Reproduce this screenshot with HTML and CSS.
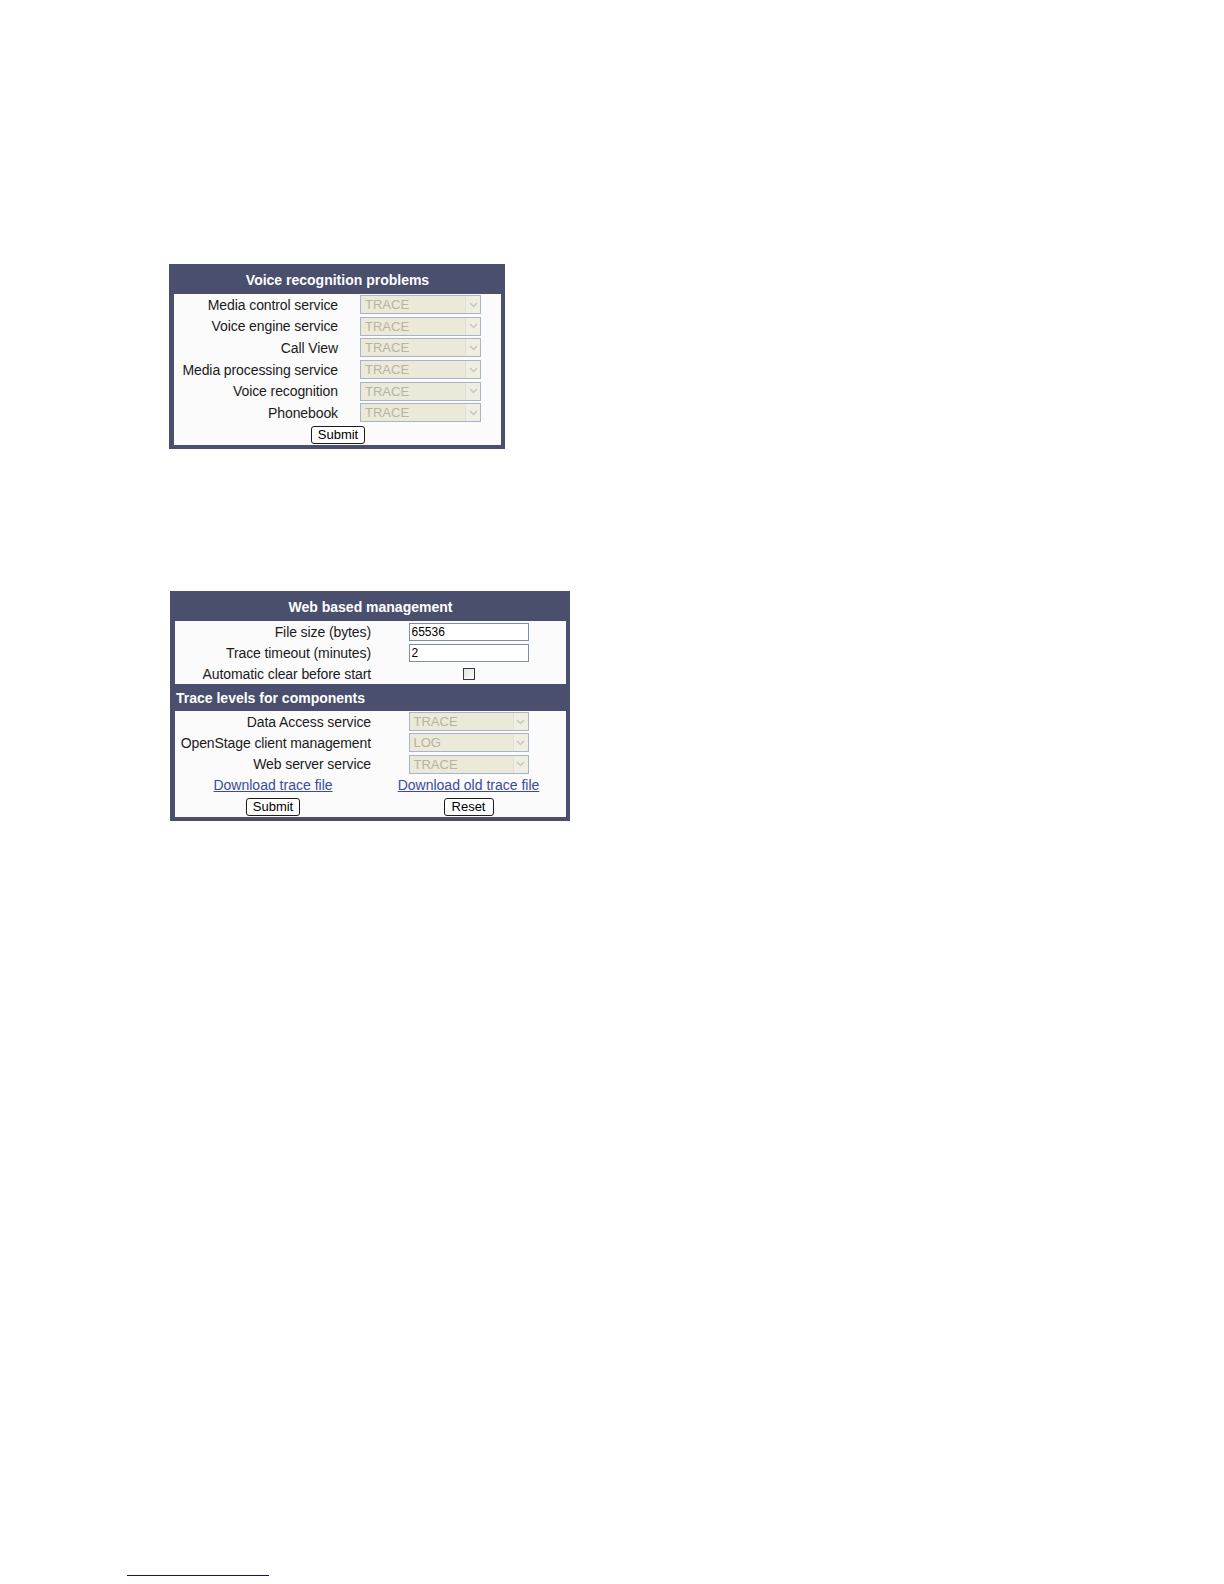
FILE: index.html
```html
<!DOCTYPE html>
<html>
<head>
<meta charset="utf-8">
<link rel="stylesheet" href="styles.css">
</head>
<body>
<div class="page">
  <div class="panel panel-voice">
    <div class="hdr">Voice recognition problems</div>
    <div class="body grid-voice">
      <div class="lbl">Media control service</div><div class="val"><div class="sel"><span>TRACE</span><i class="arr"><svg width="9" height="6" viewBox="0 0 9 6"><path d="M1 1 L4.5 4.5 L8 1" fill="none" stroke="#c9c7bd" stroke-width="1.5"/></svg></i></div></div>
      <div class="lbl">Voice engine service</div><div class="val"><div class="sel"><span>TRACE</span><i class="arr"><svg width="9" height="6" viewBox="0 0 9 6"><path d="M1 1 L4.5 4.5 L8 1" fill="none" stroke="#c9c7bd" stroke-width="1.5"/></svg></i></div></div>
      <div class="lbl">Call View</div><div class="val"><div class="sel"><span>TRACE</span><i class="arr"><svg width="9" height="6" viewBox="0 0 9 6"><path d="M1 1 L4.5 4.5 L8 1" fill="none" stroke="#c9c7bd" stroke-width="1.5"/></svg></i></div></div>
      <div class="lbl">Media processing service</div><div class="val"><div class="sel"><span>TRACE</span><i class="arr"><svg width="9" height="6" viewBox="0 0 9 6"><path d="M1 1 L4.5 4.5 L8 1" fill="none" stroke="#c9c7bd" stroke-width="1.5"/></svg></i></div></div>
      <div class="lbl">Voice recognition</div><div class="val"><div class="sel"><span>TRACE</span><i class="arr"><svg width="9" height="6" viewBox="0 0 9 6"><path d="M1 1 L4.5 4.5 L8 1" fill="none" stroke="#c9c7bd" stroke-width="1.5"/></svg></i></div></div>
      <div class="lbl">Phonebook</div><div class="val"><div class="sel"><span>TRACE</span><i class="arr"><svg width="9" height="6" viewBox="0 0 9 6"><path d="M1 1 L4.5 4.5 L8 1" fill="none" stroke="#c9c7bd" stroke-width="1.5"/></svg></i></div></div>
      <div class="full"><span class="btn btn-submit1">Submit</span></div>
    </div>
  </div>

  <div class="panel panel-web">
    <div class="hdr">Web based management</div>
    <div class="body grid-web">
      <div class="lbl">File size (bytes)</div><div class="val"><div class="inp">65536</div></div>
      <div class="lbl">Trace timeout (minutes)</div><div class="val"><div class="inp">2</div></div>
      <div class="lbl">Automatic clear before start</div><div class="val"><div class="chk"></div></div>
    </div>
    <div class="subhdr">Trace levels for components</div>
    <div class="body grid-web">
      <div class="lbl">Data Access service</div><div class="val"><div class="sel"><span>TRACE</span><i class="arr"><svg width="9" height="6" viewBox="0 0 9 6"><path d="M1 1 L4.5 4.5 L8 1" fill="none" stroke="#c9c7bd" stroke-width="1.5"/></svg></i></div></div>
      <div class="lbl">OpenStage client management</div><div class="val"><div class="sel"><span>LOG</span><i class="arr"><svg width="9" height="6" viewBox="0 0 9 6"><path d="M1 1 L4.5 4.5 L8 1" fill="none" stroke="#c9c7bd" stroke-width="1.5"/></svg></i></div></div>
      <div class="lbl">Web server service</div><div class="val"><div class="sel"><span>TRACE</span><i class="arr"><svg width="9" height="6" viewBox="0 0 9 6"><path d="M1 1 L4.5 4.5 L8 1" fill="none" stroke="#c9c7bd" stroke-width="1.5"/></svg></i></div></div>
      <div class="cell"><a class="lnk" href="#">Download trace file</a></div><div class="cell"><a class="lnk" href="#">Download old trace file</a></div>
      <div class="cell"><span class="btn btn-submit2">Submit</span></div><div class="cell"><span class="btn btn-reset">Reset</span></div>
    </div>
  </div>

  <div class="footline"></div>
</div>
</body>
</html>
```

FILE: styles.css
```css
* { box-sizing: border-box; }
html, body { margin: 0; padding: 0; background: #ffffff; }
body {
  font-family: "Liberation Sans", Arial, sans-serif;
  font-size: 14px;
  color: #1a1a1a;
}
.page {
  width: 1224px;
  height: 1584px;
  padding-top: 264px;
  display: flex;
  flex-direction: column;
}
.panel {
  background: #4a4f6e;
  padding: 0 4px 4px 5px;
}
.panel-voice { width: 336px; margin-left: 169px; }
.panel-web { width: 400px; margin-left: 170px; margin-top: 142px; }
.hdr {
  height: 30px;
  display: flex;
  align-items: center;
  justify-content: center;
  color: #ffffff;
  font-weight: bold;
  font-size: 14px;
  padding-top: 2px;
}
.subhdr {
  height: 27px;
  display: flex;
  align-items: center;
  color: #ffffff;
  font-weight: bold;
  font-size: 14px;
  padding-left: 1px;
}
.body { background: #fbfbfb; display: grid; }
.grid-voice {
  grid-template-columns: 166px 161px;
  grid-auto-rows: 21.6px;
}
.grid-voice .full { grid-row-end: span 1; height: 22.4px; }
.grid-web {
  grid-template-columns: 196px 195px;
  grid-auto-rows: 21px;
}
.grid-web + .subhdr + .grid-web { grid-auto-rows: 21.2px; }
.lbl {
  text-align: right;
  padding-right: 2px;
  display: flex;
  align-items: center;
  justify-content: flex-end;
  white-space: nowrap;
  letter-spacing: -0.1px;
}
.grid-web .lbl { padding-right: 0; }
.val, .cell {
  display: flex;
  align-items: center;
  justify-content: center;
}
.full {
  grid-column: 1 / span 2;
  display: flex;
  align-items: center;
  justify-content: center;
}
.sel {
  width: 121px;
  height: 19px;
  border: 1px solid #a9b3cc;
  background: #ebe9d7;
  display: flex;
  align-items: center;
  justify-content: space-between;
  padding-left: 4px;
  color: #b7b4a2;
  font-size: 13px;
}
.grid-web .sel { width: 120px; }
.arr {
  width: 15px;
  height: 17px;
  background: #efeee3;
  border-left: 1px solid #e2e0d2;
  display: flex;
  align-items: center;
  justify-content: center;
}
.inp {
  width: 120px;
  height: 18px;
  border: 1px solid #7f8ea6;
  background: #ffffff;
  font-size: 12px;
  color: #000;
  padding-left: 2px;
  display: flex;
  align-items: center;
}
.chk {
  width: 12px;
  height: 12px;
  border: 1px solid #2f3748;
  background: linear-gradient(135deg, #e4e4e0, #fbfbf8);
}
.lnk {
  color: #3a4aa0;
  text-decoration: underline;
  font-size: 14px;
}
.btn {
  display: inline-flex;
  align-items: center;
  justify-content: center;
  height: 18px;
  border: 1px solid #1c1c1c;
  border-radius: 3px;
  background: #ffffff;
  font-size: 13px;
  color: #000;
}
.btn-submit1 { width: 54px; margin-left: 1px; }
.btn-submit2 { width: 54px; }
.btn-reset { width: 50px; }
.footline {
  width: 142px;
  height: 1px;
  background: #101080;
  margin-left: 127px;
  margin-top: auto;
  margin-bottom: 8px;
}
```
